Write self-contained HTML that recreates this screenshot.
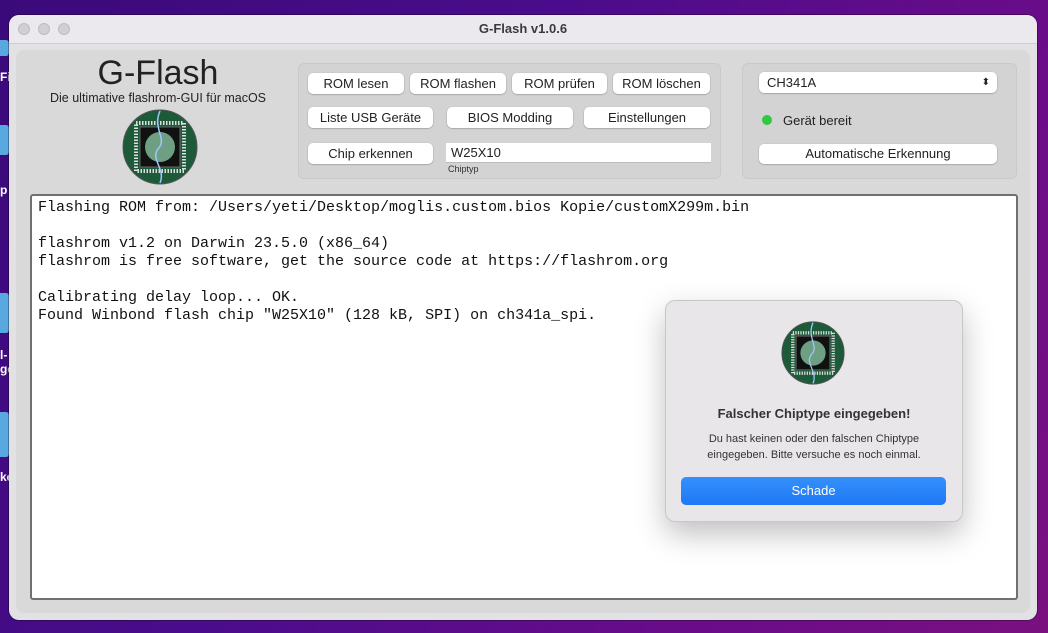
<!DOCTYPE html>
<html><head><meta charset="utf-8"><style>
*{margin:0;padding:0;box-sizing:border-box}
body{width:1048px;height:633px;overflow:hidden;position:relative;font-family:"Liberation Sans",sans-serif;background:linear-gradient(120deg,#3a0a7a 0%,#4a0c8c 40%,#6a0c8a 75%,#7a1080 100%)}
.a{position:absolute}
.win{left:9px;top:15px;width:1028px;height:605px;border-radius:10px;background:#e2e1e3;overflow:hidden;box-shadow:0 0 0 1px rgba(0,0,0,.3)}
.tb{left:0;top:0;width:100%;height:29px;background:#ebe9ee;border-bottom:1px solid #cfcdd1;text-align:center;font-size:13px;font-weight:bold;color:#3a3a3a;line-height:28px}
.tl{top:8px;width:12px;height:12px;border-radius:50%;background:#d0cfd2;border:1px solid #bdbcbf}
.panel{left:7px;top:35px;width:1014px;height:563px;background:#d9d9d9;border-radius:8px}
.box{background:#d3d3d3;border:1px solid #c9c9c9;border-radius:6px}
.btn{background:#fff;border-radius:5px;box-shadow:0 .5px 1.5px rgba(0,0,0,.35);font-size:13px;color:#222;text-align:center;line-height:21px;height:21px}
.log{left:30px;top:194px;width:988px;height:406px;background:#fff;border:2px solid #707070;border-radius:3px;font-family:"Liberation Mono",monospace;font-size:15px;line-height:18px;color:#111;padding:3px 0 0 6px;white-space:pre}
.dlg{left:665px;top:300px;width:298px;height:222px;background:#e9e6ea;border-radius:10px;border:1px solid #c8c6ca;box-shadow:0 12px 30px rgba(0,0,0,.25);text-align:center;color:#333}
</style></head><body>
<div class="a" style="left:0;top:40px;width:9px;height:16px;background:#5aa8e0;border-radius:0 3px 3px 0"></div>
<div class="a" style="left:0;top:70px;font-size:12px;color:#fff;font-weight:bold">Fi</div>
<div class="a" style="left:0;top:125px;width:9px;height:30px;background:#5aa8e0;border-radius:0 3px 3px 0"></div>
<div class="a" style="left:0;top:183px;font-size:12px;color:#fff;font-weight:bold">p</div>
<div class="a" style="left:0;top:293px;width:9px;height:40px;background:#5aa8e0;border-radius:0 3px 3px 0"></div>
<div class="a" style="left:0;top:348px;font-size:12px;color:#fff;font-weight:bold">l-<br>ge</div>
<div class="a" style="left:0;top:412px;width:9px;height:45px;background:#5aa8e0;border-radius:0 3px 3px 0"></div>
<div class="a" style="left:0;top:470px;font-size:12px;color:#fff;font-weight:bold">ke</div>

<div class="a win">
 <div class="a tb">G-Flash v1.0.6</div>
 <div class="a tl" style="left:9px"></div><div class="a tl" style="left:29px"></div><div class="a tl" style="left:49px"></div>
 <div class="a panel"></div>
</div>

<div class="a" style="left:30px;top:53px;width:256px;text-align:center;font-size:34px;color:#222;line-height:40px">G-Flash</div>
<div class="a" style="left:30px;top:91px;width:256px;text-align:center;font-size:12.5px;color:#222">Die ultimative flashrom-GUI für macOS</div>
<svg class="a" style="left:122px;top:109px" width="76" height="76" viewBox="0 0 76 76">
<circle cx="38" cy="38" r="37" fill="#1d5a3a" stroke="#555" stroke-width="1"/>
<rect x="14" y="14" width="48" height="48" fill="none" stroke="#ddd" stroke-width="4" stroke-dasharray="1.5 1.5"/>
<rect x="18" y="18" width="40" height="40" fill="#111" stroke="#666"/>
<circle cx="38" cy="38" r="15" fill="#6f9f82"/>
<path d="M38 2 C30 20 46 30 36 40 C28 50 44 60 38 74" stroke="#9cc7ff" stroke-width="1.5" fill="none"/>
</svg>

<div class="a box" style="left:298px;top:63px;width:423px;height:116px"></div>
<div class="a btn" style="left:308px;top:73px;width:96px">ROM lesen</div>
<div class="a btn" style="left:410px;top:73px;width:96px">ROM flashen</div>
<div class="a btn" style="left:512px;top:73px;width:95px">ROM prüfen</div>
<div class="a btn" style="left:613px;top:73px;width:97px">ROM löschen</div>
<div class="a btn" style="left:308px;top:107px;width:125px">Liste USB Geräte</div>
<div class="a btn" style="left:447px;top:107px;width:126px">BIOS Modding</div>
<div class="a btn" style="left:584px;top:107px;width:126px">Einstellungen</div>
<div class="a btn" style="left:308px;top:143px;width:125px">Chip erkennen</div>
<div class="a" style="left:446px;top:143px;width:265px;height:20px;background:#fff;border-bottom:1px solid #bbb;font-size:13px;line-height:20px;padding-left:5px;color:#222">W25X10</div>
<div class="a" style="left:448px;top:164px;font-size:9px;color:#333">Chiptyp</div>

<div class="a box" style="left:742px;top:63px;width:275px;height:116px"></div>
<div class="a btn" style="left:759px;top:72px;width:238px;text-align:left;padding-left:8px">CH341A<span style="position:absolute;right:7px;top:0;font-size:10px">⬍</span></div>
<div class="a" style="left:762px;top:115px;width:10px;height:10px;border-radius:50%;background:#2ec93e"></div>
<div class="a" style="left:783px;top:113px;font-size:13px;color:#222">Gerät bereit</div>
<div class="a btn" style="left:759px;top:144px;width:238px;height:20px;line-height:20px">Automatische Erkennung</div>

<div class="a log">Flashing ROM from: /Users/yeti/Desktop/moglis.custom.bios Kopie/customX299m.bin

flashrom v1.2 on Darwin 23.5.0 (x86_64)
flashrom is free software, get the source code at https://flashrom.org

Calibrating delay loop... OK.
Found Winbond flash chip "W25X10" (128 kB, SPI) on ch341a_spi.</div>

<div class="a dlg">
<svg class="a" style="left:115px;top:20px" width="64" height="64" viewBox="0 0 76 76">
<circle cx="38" cy="38" r="37" fill="#1d5a3a" stroke="#555" stroke-width="1"/>
<rect x="14" y="14" width="48" height="48" fill="none" stroke="#ddd" stroke-width="4" stroke-dasharray="1.5 1.5"/>
<rect x="18" y="18" width="40" height="40" fill="#111" stroke="#666"/>
<circle cx="38" cy="38" r="15" fill="#6f9f82"/>
<path d="M38 2 C30 20 46 30 36 40 C28 50 44 60 38 74" stroke="#9cc7ff" stroke-width="1.5" fill="none"/>
</svg>
<div class="a" style="left:0;top:105px;width:100%;font-size:13px;font-weight:bold">Falscher Chiptype eingegeben!</div>
<div class="a" style="left:0;top:130px;width:100%;font-size:11px;line-height:16px">Du hast keinen oder den falschen Chiptype<br>eingegeben. Bitte versuche es noch einmal.</div>
<div class="a" style="left:15px;top:176px;width:265px;height:28px;border-radius:5px;background:linear-gradient(#3590fb,#1f78f6);color:#fff;font-size:13px;line-height:28px">Schade</div>
</div>
</body></html>
